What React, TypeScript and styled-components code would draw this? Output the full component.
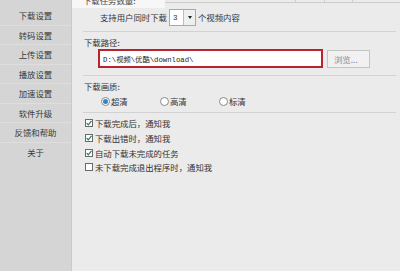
import styled, { createGlobalStyle } from 'styled-components';

const GlobalStyle = createGlobalStyle`
	html, body {
		margin: 0;
		padding: 0;
		background: #ebebeb;
	}
	body {
		font-family: 'Noto Sans CJK SC', 'Noto Sans', sans-serif;
		color: #333;
	}
`;

const FONT = '8.4px';

const Window = styled.div`
	display: flex;
	width: 400px;
	height: 271px;
	overflow: hidden;
	background: #eeeeee;
`;

const Sidebar = styled.nav`
	width: 71px;
	flex-shrink: 0;
	padding-top: 6px;
	background: #d5d5d5;
	border-right: 1px solid #c9c9c9;
	display: flex;
	flex-direction: column;
`;

const NavItem = styled.div`
	height: 19.5px;
	box-sizing: border-box;
	display: flex;
	align-items: center;
	justify-content: center;
	font-size: ${FONT};
	color: #3a3a3a;
	border-bottom: 1px solid #dedede;
	&:last-child {
		border-bottom: none;
	}
`;

const Content = styled.main`
	width: 313px;
	flex-shrink: 0;
	padding: 0 7px 0 11px;
	background: #ebebeb;
	border-right: 1px solid #d6d6d6;
	display: flex;
	flex-direction: column;
`;

const TopStrip = styled.div`
	display: flex;
	height: 8px;
	margin-left: -11px;
	margin-right: -7px;
	overflow: hidden;
`;

const Legend = styled.div`
	width: 88px;
	height: 8px;
	background: #f7f7f7;
	padding-left: 11px;
	font-size: ${FONT};
	line-height: 9px;
	color: #444;
	overflow: hidden;
	span {
		display: block;
		margin-top: -4px;
	}
`;

const TopCells = styled.div`
	flex: 1;
	display: flex;
	height: 2px;
	border-bottom: 1px solid #cdcdcd;
`;

const TopCell = styled.div<{ w: number }>`
	width: ${(p) => p.w}px;
	flex-shrink: 0;
	border-right: 1px solid #cdcdcd;
	&:last-child {
		border-right: none;
		flex: 1;
	}
`;

const SupportRow = styled.div`
	display: flex;
	align-items: center;
	gap: 2px;
	height: 18px;
	margin-top: 0px;
	padding-left: 17px;
	font-size: ${FONT};
`;

const Select = styled.div`
	display: flex;
	height: 17px;
	width: 27px;
	box-sizing: border-box;
	border: 1px solid #a9a9a9;
	background: #fff;
	margin-top: 1px;
`;

const SelectValue = styled.div`
	flex: 1;
	display: flex;
	align-items: center;
	padding-left: 3px;
	font-family: 'Liberation Mono', monospace;
	font-size: 7.5px;
`;

const SelectArrow = styled.div`
	width: 11px;
	border-left: 1px solid #bdbdbd;
	background: #efefef;
	display: flex;
	align-items: center;
	justify-content: center;
	&::after {
		content: '';
		border-left: 2.5px solid transparent;
		border-right: 2.5px solid transparent;
		border-top: 3px solid #222;
	}
`;

const Divider = styled.div<{ top: number }>`
	height: 0;
	border-top: 1px solid #d2d2d2;
	margin-top: ${(p) => p.top}px;
`;

const Label = styled.div<{ top: number }>`
	font-size: ${FONT};
	line-height: 11px;
	height: 11px;
	padding-left: 1px;
	margin-top: ${(p) => p.top}px;
`;

const PathRow = styled.div`
	display: flex;
	align-items: center;
	gap: 4px;
	margin-top: 1px;
	padding-left: 15px;
`;

const PathInput = styled.div`
	width: 225px;
	height: 19px;
	box-sizing: border-box;
	border: 2px solid #b8232f;
	background: #fff;
	display: flex;
	align-items: center;
	padding-left: 3px;
	font-family: 'Liberation Mono', 'Noto Sans CJK SC', monospace;
	font-size: 7.3px;
	color: #222;
`;

const BrowseButton = styled.div`
	width: 43px;
	height: 18px;
	box-sizing: border-box;
	border: 1px solid #c4c4c4;
	background: #f1f1f1;
	color: #8c8c8c;
	font-size: ${FONT};
	display: flex;
	align-items: center;
	padding-left: 6px;
	margin-top: 1px;
`;

const RadioRow = styled.div`
	display: flex;
	align-items: center;
	height: 12px;
	margin-top: 3px;
	padding-left: 18px;
`;

const RadioOption = styled.label<{ w: number }>`
	display: flex;
	align-items: center;
	gap: 1px;
	width: ${(p) => p.w}px;
	font-size: ${FONT};
`;

const RadioCircle = styled.span<{ checked?: boolean }>`
	width: 9px;
	height: 9px;
	box-sizing: border-box;
	border-radius: 50%;
	border: 1px solid #8a8a8a;
	background: #fff;
	display: flex;
	align-items: center;
	justify-content: center;
	&::after {
		content: '';
		display: ${(p) => (p.checked ? 'block' : 'none')};
		width: 5px;
		height: 5px;
		border-radius: 50%;
		background: #2c86d2;
	}
`;

const CheckList = styled.div`
	display: flex;
	flex-direction: column;
	margin-top: 3px;
	padding-left: 2px;
`;

const CheckRow = styled.label`
	display: flex;
	align-items: center;
	gap: 2px;
	height: 14.67px;
	font-size: ${FONT};
`;

const CheckBox = styled.span`
	width: 8px;
	height: 8px;
	box-sizing: border-box;
	border: 1px solid #6a6a6a;
	background: #fff;
	display: flex;
	align-items: center;
	justify-content: center;
	svg {
		display: block;
	}
`;

const Check = ({ checked }: { checked: boolean }) => (
	<CheckBox>
		{checked && (
			<svg width="6" height="6" viewBox="0 0 6 6">
				<path d="M0.6 3.1 L2.3 4.8 L5.5 0.9" fill="none" stroke="#2f7d62" strokeWidth="1.3" />
			</svg>
		)}
	</CheckBox>
);

const navItems = ['下载设置', '转码设置', '上传设置', '播放设置', '加速设置', '软件升级', '反馈和帮助', '关于'];

const checks = [
	{ label: '下载完成后，通知我', checked: true },
	{ label: '下载出错时，通知我', checked: true },
	{ label: '自动下载未完成的任务', checked: true },
	{ label: '未下载完成退出程序时，通知我', checked: false },
];

export default function App() {
	return (
		<>
			<GlobalStyle />
			<Window>
				<Sidebar>
					{navItems.map((item) => (
						<NavItem key={item}>{item}</NavItem>
					))}
				</Sidebar>
				<Content>
					<TopStrip>
						<Legend>
							<span>下载任务数量:</span>
						</Legend>
						<TopCells>
							<TopCell w={130} />
							<TopCell w={28} />
							<TopCell w={27} />
							<TopCell w={50} />
						</TopCells>
					</TopStrip>
					<SupportRow>
						<span>支持用户同时下载</span>
						<Select>
							<SelectValue>3</SelectValue>
							<SelectArrow />
						</Select>
						<span>个视频内容</span>
					</SupportRow>
					<Divider top={5} />
					<Label top={5}>下载路径:</Label>
					<PathRow>
						<PathInput>D:\视频\优酷\download\</PathInput>
						<BrowseButton>浏览...</BrowseButton>
					</PathRow>
					<Divider top={7} />
					<Label top={5}>下载画质:</Label>
					<RadioRow>
						<RadioOption w={59}>
							<RadioCircle checked />
							超清
						</RadioOption>
						<RadioOption w={59}>
							<RadioCircle />
							高清
						</RadioOption>
						<RadioOption w={60}>
							<RadioCircle />
							标清
						</RadioOption>
					</RadioRow>
					<Divider top={5} />
					<CheckList>
						{checks.map((c) => (
							<CheckRow key={c.label}>
								<Check checked={c.checked} />
								{c.label}
							</CheckRow>
						))}
					</CheckList>
				</Content>
			</Window>
		</>
	);
}
